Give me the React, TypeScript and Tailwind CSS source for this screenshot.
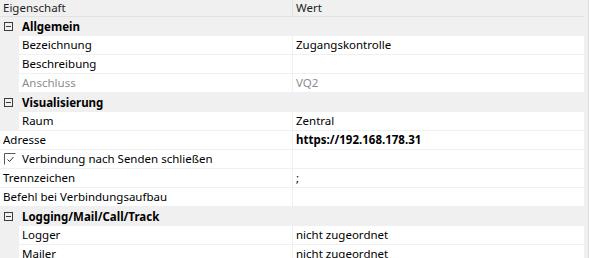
import React from 'react'

type Row =
  | { kind: 'section'; label: string }
  | { kind: 'sub'; label: string; value?: string; muted?: boolean }
  | { kind: 'top'; label: string; value?: string; bold?: boolean; check?: boolean }

const rows: Row[] = [
  { kind: 'section', label: 'Allgemein' },
  { kind: 'sub', label: 'Bezeichnung', value: 'Zugangskontrolle' },
  { kind: 'sub', label: 'Beschreibung', value: '' },
  { kind: 'sub', label: 'Anschluss', value: 'VQ2', muted: true },
  { kind: 'section', label: 'Visualisierung' },
  { kind: 'sub', label: 'Raum', value: 'Zentral' },
  { kind: 'top', label: 'Adresse', value: 'https://192.168.178.31', bold: true },
  { kind: 'top', label: 'Verbindung nach Senden schließen', check: true },
  { kind: 'top', label: 'Trennzeichen', value: ';' },
  { kind: 'top', label: 'Befehl bei Verbindungsaufbau', value: '' },
  { kind: 'section', label: 'Logging/Mail/Call/Track' },
  { kind: 'sub', label: 'Logger', value: 'nicht zugeordnet' },
  { kind: 'sub', label: 'Mailer', value: 'nicht zugeordnet' },
]

const CollapseIcon = () => (
  <svg width="9" height="9" viewBox="0 0 9 9" className="shrink-0">
    <rect x="0.5" y="0.5" width="8" height="8" fill="none" stroke="#3c3c3c" />
    <path d="M2 4.5h5" stroke="#3c3c3c" />
  </svg>
)

const CheckMark = () => (
  <svg width="12" height="12" viewBox="0 0 12 12" className="shrink-0">
    <path d="M0.5 11.5V0.5H11.5" fill="none" stroke="#5a5a5a" />
    <path d="M3.5 6.5l2 2 4-4.5" fill="none" stroke="#333" strokeWidth="1" />
  </svg>
)

function PropRow({ row }: { row: Row }) {
  if (row.kind === 'section') {
    return (
      <div className="flex h-[19px] shrink-0 items-center bg-[#f0f0f0] pl-[4px]">
        <CollapseIcon />
        <span className="ml-[9px] font-bold text-black">{row.label}</span>
      </div>
    )
  }
  if (row.kind === 'sub') {
    return (
      <div className="flex h-[19px] shrink-0 bg-[#f0f0f0]">
        <div className="w-[19px] shrink-0" />
        <div className="flex w-[274px] shrink-0 items-center border-b border-r border-[#f0f0f0] bg-white pl-[3px]">
          <span className={row.muted ? 'text-[#8d8d8d]' : 'text-black'}>{row.label}</span>
        </div>
        <div className="flex flex-1 items-center border-b border-[#f0f0f0] bg-white pl-[3px]">
          <span className={row.muted ? 'text-[#8d8d8d]' : 'text-black'}>{row.value}</span>
        </div>
      </div>
    )
  }
  return (
    <div className="flex h-[19px] shrink-0 bg-white">
      <div className="flex w-[293px] shrink-0 items-center border-b border-r border-[#f0f0f0] pl-[3px]">
        {row.check ? (
          <>
            <span className="ml-[1px]">
              <CheckMark />
            </span>
            <span className="ml-[6px] text-black">{row.label}</span>
          </>
        ) : (
          <span className="text-black">{row.label}</span>
        )}
      </div>
      <div className="flex flex-1 items-center border-b border-[#f0f0f0] pl-[3px]">
        <span className={row.bold ? 'font-bold text-black' : 'text-black'}>{row.value}</span>
      </div>
    </div>
  )
}

export default function App() {
  return (
    <div
      className="flex h-[258px] w-[589px] overflow-hidden bg-[#f0f0f0] text-[11.5px] leading-none"
      style={{ fontFamily: '"Noto Sans", "Open Sans", sans-serif' }}
    >
      <div className="flex w-[584px] shrink-0 flex-col">
        <div className="flex h-[17px] shrink-0 border-b border-[#e2e2e2] text-[#1e1e1e]">
          <div className="flex w-[293px] shrink-0 items-center border-r border-[#e2e2e2] pl-[3px]">Eigenschaft</div>
          <div className="flex flex-1 items-center pl-[3px]">Wert</div>
        </div>
        {rows.map((r, i) => (
          <PropRow key={i} row={r} />
        ))}
      </div>
      <div className="w-[4px] shrink-0 bg-[#f0f0f0]" />
      <div className="w-[1px] shrink-0 bg-[#dcdcdc]" />
    </div>
  )
}
